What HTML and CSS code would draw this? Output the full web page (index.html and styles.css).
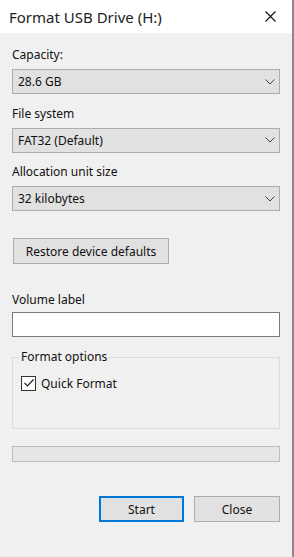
FILE: index.html
```html
<!DOCTYPE html>
<html lang="en">
<head>
    <meta charset="UTF-8">
    <title>Format USB Drive (H:)</title>
    <link rel="stylesheet" href="styles.css">
</head>
<body>
    <div class="window">
        <!-- 标题栏 -->
        <div class="titlebar">
            <span class="title">Format USB Drive (H:)</span>
            <svg class="close-x" width="11" height="11" viewBox="0 0 11 11">
                <path d="M0.5 0.5 L10.5 10.5 M10.5 0.5 L0.5 10.5" stroke="#111" stroke-width="1.1" fill="none"/>
            </svg>
        </div>
        <div class="content">
            <div class="field">
                <div class="label">Capacity:</div>
                <div class="select">
                    <span>28.6 GB</span>
                    <svg class="chev" width="10" height="6" viewBox="0 0 10 6"><polyline points="0.5,0.5 5,5 9.5,0.5" stroke="#444" fill="none"/></svg>
                </div>
            </div>
            <div class="field">
                <div class="label">File system</div>
                <div class="select">
                    <span>FAT32 (Default)</span>
                    <svg class="chev" width="10" height="6" viewBox="0 0 10 6"><polyline points="0.5,0.5 5,5 9.5,0.5" stroke="#444" fill="none"/></svg>
                </div>
            </div>
            <div class="field">
                <div class="label">Allocation unit size</div>
                <div class="select">
                    <span>32 kilobytes</span>
                    <svg class="chev" width="10" height="6" viewBox="0 0 10 6"><polyline points="0.5,0.5 5,5 9.5,0.5" stroke="#444" fill="none"/></svg>
                </div>
            </div>

            <div class="btn restore">Restore device defaults</div>

            <div class="label vol">Volume label</div>
            <div class="textbox"></div>

            <fieldset class="group">
                <legend>Format options</legend>
                <div class="check-row">
                    <span class="checkbox">
                        <svg width="12" height="12" viewBox="0 0 12 12"><polyline points="1.5,6 4.5,9 10.5,2.5" stroke="#222" stroke-width="1.2" fill="none"/></svg>
                    </span>
                    <span>Quick Format</span>
                </div>
            </fieldset>

            <div class="progress"></div>

            <div class="actions">
                <div class="btn start">Start</div>
                <div class="btn close">Close</div>
            </div>
        </div>
    </div>
</body>
</html>
```

FILE: styles.css
```css
body{
    margin: 0;
    background: #f0f0f0;
    font-family: "Noto Sans", "Open Sans", sans-serif;
    font-size: 12px;
    color: #111;
}
.window{
    width: 294px;
    height: 557px;
    box-sizing: border-box;
    border-right: 2px solid #8a8a8a;
    background: #f0f0f0;
}
/* 标题栏 */
.titlebar{
    height: 33px;
    background: #fff;
    display: flex;
    align-items: center;
    justify-content: space-between;
    padding: 0 16px 0 9px;
}
.title{
    font-size: 15px;
    color: #222;
}
.close-x{
    margin-top: -1px;
}
.content{
    padding: 14px 12px 0 12px;
}
.label{
    line-height: 16px;
    height: 16px;
    margin-bottom: 6px;
}
.field{
    margin-bottom: 11.5px;
}
.select{
    height: 25px;
    box-sizing: border-box;
    border: 1px solid #adadad;
    background: #e1e1e1;
    display: flex;
    align-items: center;
    justify-content: space-between;
    padding: 0 4px 0 5px;
}
.btn{
    box-sizing: border-box;
    height: 26px;
    border: 1px solid #adadad;
    background: #e1e1e1;
    display: flex;
    align-items: center;
    justify-content: center;
}
.restore{
    width: 156px;
    margin: 27px 0 0 1px;
}
.vol{
    margin: 28px 0 4px 0;
}
.textbox{
    height: 25px;
    box-sizing: border-box;
    border: 1px solid #7a7a7a;
    background: #fff;
}
.group{
    margin: 12px 0 0 0;
    border: 1px solid #dcdcdc;
    padding: 10px 8px 37px 8px;
}
.group legend{
    padding: 0 2px;
    margin-left: -2px;
    line-height: 16px;
}
.check-row{
    display: flex;
    align-items: center;
    gap: 5px;
    height: 16px;
}
.checkbox{
    width: 15px;
    height: 15px;
    box-sizing: border-box;
    border: 1px solid #333;
    background: #fff;
    display: flex;
    align-items: center;
    justify-content: center;
}
.progress{
    margin-top: 17px;
    height: 16px;
    box-sizing: border-box;
    border: 1px solid #bcbcbc;
    background: #e6e6e6;
}
.actions{
    margin-top: 34px;
    display: flex;
    justify-content: flex-end;
    gap: 10px;
}
.start{
    width: 85px;
    border: 2px solid #0078d7;
}
.close{
    width: 86px;
}
```
